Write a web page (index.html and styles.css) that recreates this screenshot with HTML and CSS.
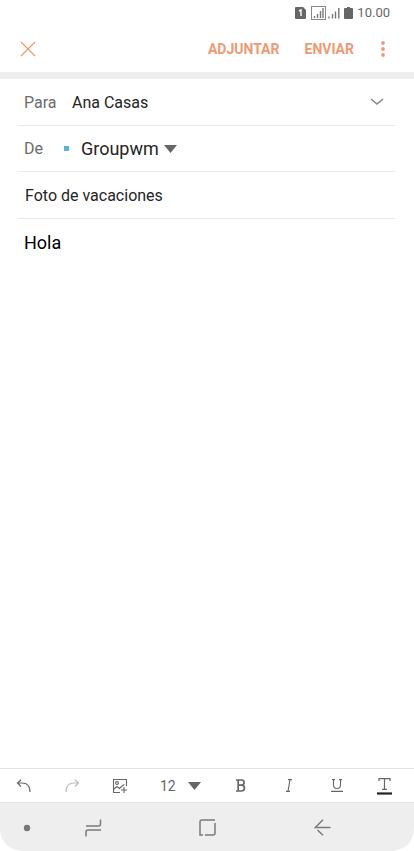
FILE: index.html
```
<!DOCTYPE html>
<html lang="es">
<head>
    <meta charset="UTF-8">
    <meta name="viewport" content="width=device-width, initial-scale=1.0">
    <title>Foto de vacaciones</title>
    <link rel="stylesheet" href="styles.css">
</head>
<body>

<div class="status-bar">
    <svg width="11" height="12" viewBox="0 0 11 12">
        <path d="M1 0h7l3 3v8a1 1 0 0 1-1 1H1a1 1 0 0 1-1-1V1a1 1 0 0 1 1-1z" fill="#666"/>
        <path d="M4 4l2-1v6" fill="none" stroke="#fff" stroke-width="1.4"/>
    </svg>
    <svg class="signal-boxed" width="15" height="14" viewBox="0 0 15 14">
        <rect x=".5" y=".5" width="14" height="13" fill="none" stroke="#888"/>
        <path d="M3.5 12v-2M6.5 12V8M9.5 12V5M12 12V2" stroke="#777" stroke-width="1.4"/>
    </svg>
    <svg class="signal" width="12" height="12" viewBox="0 0 12 12">
        <path d="M1 11.500V9.500M4.500 11.500V7M7.500 11.500V4.500M10.800 11.500V1" stroke="#777" stroke-width="1.4"/>
    </svg>
    <svg class="battery" width="9" height="12" viewBox="0 0 9 12">
        <path d="M3 0h3v1h2a1 1 0 0 1 1 1v9a1 1 0 0 1-1 1H1a1 1 0 0 1-1-1V2a1 1 0 0 1 1-1h2z" fill="#666"/>
    </svg>
    <span class="time">10.00</span>
</div>

<header class="app-bar">
    <button class="close" type="button" aria-label="Cerrar">
        <svg width="16" height="16" viewBox="0 0 16 16">
            <path d="M1 1l14 14M15 1L1 15" fill="none" stroke="#f09a74" stroke-width="1.3"/>
        </svg>
    </button>
    <button class="action" type="button">ADJUNTAR</button>
    <button class="action" type="submit" form="compose">ENVIAR</button>
    <button class="more" type="button" aria-label="Más opciones">
        <svg width="4" height="16" viewBox="0 0 4 16" fill="#f09a74">
            <circle cx="2" cy="2" r="1.9"/>
            <circle cx="2" cy="8" r="1.9"/>
            <circle cx="2" cy="14" r="1.9"/>
        </svg>
    </button>
</header>

<form class="compose" id="compose">
    <div class="row">
        <label class="label" for="to">Para</label>
        <input class="field" id="to" type="text" value="Ana Casas">
        <button class="expand" type="button" aria-label="Mostrar CC y CCO">
            <svg width="14" height="8" viewBox="0 0 14 8">
                <path d="M1 1l6 5 6-5" fill="none" stroke="#888" stroke-width="1.5"/>
            </svg>
        </button>
    </div>
    <div class="row row-from">
        <label class="label" for="from">De</label>
        <span class="account-color"></span>
        <select class="account" id="from">
            <option>Groupwm</option>
        </select>
        <svg class="arrow" width="13" height="8" viewBox="0 0 13 8">
            <path d="M0 0h13L6.500 8z" fill="#666"/>
        </svg>
    </div>
    <div class="row">
        <input class="field subject" type="text" aria-label="Asunto" value="Foto de vacaciones">
    </div>
    <textarea class="message" aria-label="Mensaje">Hola</textarea>
</form>

<div class="toolbar">
    <button class="tool" type="button" aria-label="Deshacer">
        <svg width="16" height="14" viewBox="0 0 16 14">
            <path d="M5 .8L1.500 4 5 7.500M1.500 4H6c5 0 8 3 8 9" fill="none" stroke="#666" stroke-width="1.2"/>
        </svg>
    </button>
    <button class="tool" type="button" aria-label="Rehacer" disabled>
        <svg width="16" height="14" viewBox="0 0 16 14">
            <path d="M11 .8L14.500 4 11 7.500M14.500 4H10c-5 0-8 3-8 9" fill="none" stroke="#bbb" stroke-width="1.2"/>
        </svg>
    </button>
    <button class="tool" type="button" aria-label="Insertar imagen">
        <svg width="16" height="16" viewBox="0 0 16 16" fill="none" stroke="#666" stroke-width="1.1">
            <path d="M8 14.500H1.500V1.500h13V8"/>
            <circle cx="5" cy="5" r="1.400"/>
            <path d="M1.500 11.500l3.500-3 2.500 2L11 7.300l1.500-.8M12 9v6M9 12h6"/>
        </svg>
    </button>
    <div class="size">
        <select class="size-select" aria-label="Tamaño de fuente">
            <option>12</option>
        </select>
        <svg class="arrow" width="13" height="8" viewBox="0 0 13 8">
            <path d="M0 0h13L6.500 8z" fill="#666"/>
        </svg>
    </div>
    <button class="tool" type="button" aria-label="Negrita">
        <svg width="10" height="13" viewBox="0 0 10 13" fill="none" stroke="#666" stroke-width="1.7">
            <path d="M0 1h5.500a2.600 2.600 0 0 1 0 5.200H2M5.500 6.200a2.900 2.900 0 0 1 0 5.800H0M2.200 1v11"/>
        </svg>
    </button>
    <button class="tool" type="button" aria-label="Cursiva">
        <svg width="8" height="13" viewBox="0 0 8 13" fill="none" stroke="#666" stroke-width="1.1">
            <path d="M3 .6h4M1 12.400h4M5 .6L3 12.400"/>
        </svg>
    </button>
    <button class="tool" type="button" aria-label="Subrayado">
        <svg width="12" height="13" viewBox="0 0 12 13" fill="none" stroke="#666" stroke-width="1.100">
            <path d="M1 .6h3M8 .6h3M2.500 .6V6a3.500 3.500 0 0 0 7 0V.6M0 12.400h12"/>
        </svg>
    </button>
    <button class="tool" type="button" aria-label="Color del texto">
        <svg width="15" height="18" viewBox="0 0 15 18" fill="none">
            <path d="M2 4V1.600h11V4M7.500 1.600v10.800M5 12.400h5" stroke="#666" stroke-width="1.2"/>
            <path d="M0 16.500h15" stroke="#222" stroke-width="2.200"/>
        </svg>
    </button>
</div>

<nav class="nav-bar">
    <button class="pin" type="button" aria-label="Fijar barra">
        <svg width="8" height="8" viewBox="0 0 8 8">
            <circle cx="4" cy="4" r="3.200" fill="#777"/>
        </svg>
    </button>
    <button type="button" aria-label="Recientes">
        <svg width="17" height="18" viewBox="0 0 17 18">
            <path d="M1 7h12.500a2 2 0 0 0 2-2V.5M16 11H3a2 2 0 0 0-2 2v4.500" fill="none" stroke="#7a7a7a" stroke-width="1.500"/>
        </svg>
    </button>
    <button type="button" aria-label="Inicio">
        <svg width="17" height="17" viewBox="0 0 17 17">
            <path d="M16 1H3a2 2 0 0 0-2 2v13h3M6 16h8a2 2 0 0 0 2-2V4" fill="none" stroke="#7a7a7a" stroke-width="1.500"/>
        </svg>
    </button>
    <button type="button" aria-label="Atrás">
        <svg width="17" height="17" viewBox="0 0 17 17">
            <path d="M9 .8L1.300 8.500H16.500M3.500 11L9 16.300" fill="none" stroke="#7a7a7a" stroke-width="1.500"/>
        </svg>
    </button>
</nav>

</body>
</html>
```
FILE: styles.css
```
* {
    box-sizing: border-box;
}

body {
    display: flex;
    flex-direction: column;
    min-height: 100vh;
    margin: 0;
    background-color: #fff;
    color: #252525;
    font-family: Roboto, sans-serif;
    font-size: 16px;
}

button,
input,
select,
textarea {
    margin: 0;
    padding: 0;
    border: none;
    outline: none;
    background: none;
    color: inherit;
    font: inherit;
    appearance: none;
}

button,
select {
    cursor: pointer;
}

svg {
    display: block;
    flex: none;
}

/* Status bar */
.status-bar {
    display: flex;
    align-items: center;
    justify-content: flex-end;
    height: 25px;
    padding-right: 24px;
}

.signal-boxed {
    margin-left: 5px;
}

.signal {
    margin-left: 2px;
}

.battery {
    margin-left: 4px;
}

.time {
    margin-left: 4px;
    color: #666;
    font-size: 13px;
}

/* App bar */
.app-bar {
    display: flex;
    align-items: center;
    height: 54px;
    padding: 0 24px 0 20px;
    border-bottom: 7px solid #eee;
}

.close {
    margin-right: auto;
}

.action {
    margin-left: 25px;
    color: #f09a74;
    font-size: 14px;
    font-weight: bold;
}

.more {
    margin-left: 22px;
    padding: 0 5px;
}

/* Compose form */
.compose {
    display: flex;
    flex: 1;
    flex-direction: column;
    padding: 0 18px;
}

.row {
    display: flex;
    align-items: center;
    height: 47px;
    padding: 0 12px 0 6px;
    border-bottom: 1px solid #eaeaea;
}

.label {
    width: 48px;
    color: #6c6c6c;
}

.field {
    flex: 1;
    min-width: 0;
}

.row-from {
    height: 46px;
}

.row-from .label {
    width: 40px;
}

.account-color {
    width: 5px;
    height: 5px;
    background-color: #58b4d8;
}

.account {
    margin: 0 5px 0 12px;
    font-size: 18px;
}

.subject {
    padding-left: 1px;
}

.message {
    flex: 1;
    padding: 12px 6px;
    color: #000;
    font-size: 18px;
    line-height: 24px;
    resize: none;
}

.arrow {
    pointer-events: none;
}

/* Formatting toolbar */
.toolbar {
    display: flex;
    align-items: center;
    justify-content: space-between;
    height: 34px;
    padding-right: 5px;
    border-top: 1px solid #e2e2e2;
}

.tool {
    display: flex;
    justify-content: center;
    width: 48px;
}

.size {
    display: flex;
    align-items: center;
    justify-content: center;
    width: 72px;
    gap: 12px;
    color: #666;
    font-size: 14px;
}

/* Navigation bar */
.nav-bar {
    display: grid;
    grid-template-columns: 36px 1fr 1fr 1fr 34px;
    height: 49px;
    padding-top: 1px;
    border-top: 1px solid #e2e2e2;
    border-radius: 0 0 22px 22px;
    background-color: #eee;
}

.nav-bar button {
    display: flex;
    align-items: center;
    justify-content: center;
}

.nav-bar .pin {
    justify-content: flex-end;
    padding-right: 5px;
}
```
